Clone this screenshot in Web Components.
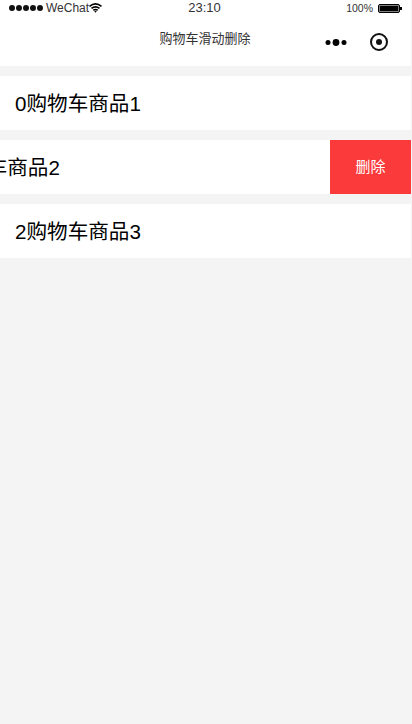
<!DOCTYPE html>
<html>
<head>
<meta charset="utf-8">
<style>
	html, body { margin: 0; height: 100%; background: #f4f4f4; }
	body { font-family: "Liberation Sans", "Noto Sans CJK SC", sans-serif; overflow: hidden; }
	#page { width: 411px; height: 724px; display: flex; flex-direction: column; }
</style>
</head>
<body>
<div id="page">
	<status-bar></status-bar>
	<nav-bar>购物车滑动删除</nav-bar>
	<cart-list>
		<cart-row>0购物车商品1</cart-row>
		<cart-row swiped>1购物车商品2</cart-row>
		<cart-row>2购物车商品3</cart-row>
	</cart-list>
</div>

<script>
class StatusBar extends HTMLElement {
	connectedCallback(){
		const shadow = this.attachShadow({ mode: 'open' })
		shadow.innerHTML = `
		<style>
			:host {
				display: grid;
				grid-template-columns: 1fr auto 1fr;
				align-items: center;
				height: 16px;
				background: #fff;
				color: #333;
				font-size: 12px;
				line-height: 16px;
			}
			.left { display: flex; align-items: center; padding-left: 9px; }
			.dots { display: flex; gap: 1px; margin-right: 3px; }
			.dots i { width: 6px; height: 6px; border-radius: 50%; background: #111; }
			.time { font-size: 13px; margin-right: 2px; }
			.right { display: flex; align-items: center; justify-content: flex-end; padding-right: 9px; font-size: 10.500px; }
			.batt { display: flex; align-items: center; margin-left: 5px; }
			.batt b { box-sizing: border-box; width: 22px; height: 9px; border: 1.500px solid #000; border-radius: 2px; background: #000; box-shadow: inset 0 0 0 .5px #fff; }
			.batt u { width: 2px; height: 3px; background: #000; }
			svg { display: block; }
		</style>
		<div class="left">
			<div class="dots"><i></i><i></i><i></i><i></i><i></i></div>
			<span>WeChat</span>
			<svg width="13" height="10" viewBox="0 0 12 9"><path d="M.5 3Q6-1.500 11.500 3M2.300 4.900Q6 2 9.700 4.900M4 6.600Q6 5.200 8 6.600" fill="none" stroke="#000" stroke-width="1.500"/><path d="M4.900 7.500Q6 6.800 7.100 7.500L6 8.800Z" fill="#000"/></svg>
		</div>
		<div class="time">23:10</div>
		<div class="right"><span>100%</span><div class="batt"><b></b><u></u></div></div>`
	}
}

class NavBar extends HTMLElement {
	connectedCallback(){
		const shadow = this.attachShadow({ mode: 'open' })
		shadow.innerHTML = `
		<style>
			:host {
				display: flex;
				align-items: center;
				justify-content: center;
				position: relative;
				height: 50px;
				background: #fff;
				color: #333;
				font-size: 13px;
			}
			.title { margin: 0 1px 7px 0; }
			.caps {
				position: absolute;
				top: 17px;
				left: 325px;
				display: flex;
				align-items: center;
				gap: 23px;
			}
			svg { display: block; }
		</style>
		<div class="title"><slot></slot></div>
		<div class="caps">
			<svg width="22" height="9" viewBox="0 0 22 9"><circle cx="3" cy="4.500" r="2.500" fill="#000"/><circle cx="11" cy="4.500" r="3.400" fill="#000"/><circle cx="19" cy="4.500" r="2.500" fill="#000"/></svg>
			<svg width="18" height="18" viewBox="0 0 18 18"><circle cx="9" cy="9" r="8" fill="none" stroke="#111" stroke-width="2"/><circle cx="9" cy="9" r="3" fill="#111"/></svg>
		</div>`
	}
}

class CartList extends HTMLElement {
	connectedCallback(){
		const shadow = this.attachShadow({ mode: 'open' })
		shadow.innerHTML = `
		<style>
			:host {
				display: flex;
				flex-direction: column;
				gap: 10px;
				padding-top: 10px;
			}
		</style>
		<slot></slot>`
	}
}

class CartRow extends HTMLElement {
	connectedCallback(){
		const shadow = this.attachShadow({ mode: 'open' })
		shadow.innerHTML = `
		<style>
			:host {
				display: block;
				height: 54px;
				overflow: hidden;
				background: #fff;
			}
			.track { display: flex; height: 100%; }
			:host([swiped]) .track { transform: translateX(-81px); }
			:host(:not([swiped])) .del { display: none; }
			.item {
				flex: none;
				box-sizing: border-box;
				width: 100%;
				padding-left: 15px;
				font-size: 20.600px;
				line-height: 56px;
				color: #000;
			}
			.del {
				flex: none;
				width: 81px;
				padding-bottom: 3px;
				box-sizing: border-box;
				display: flex;
				align-items: center;
				justify-content: center;
				background: #fb3a3c;
				color: #fff;
				font-size: 15px;
			}
		</style>
		<div class="track">
			<div class="item"><slot></slot></div>
			<div class="del">删除</div>
		</div>`
	}
}

customElements.define('status-bar', StatusBar)
customElements.define('nav-bar', NavBar)
customElements.define('cart-list', CartList)
customElements.define('cart-row', CartRow)
</script>
</body>
</html>
